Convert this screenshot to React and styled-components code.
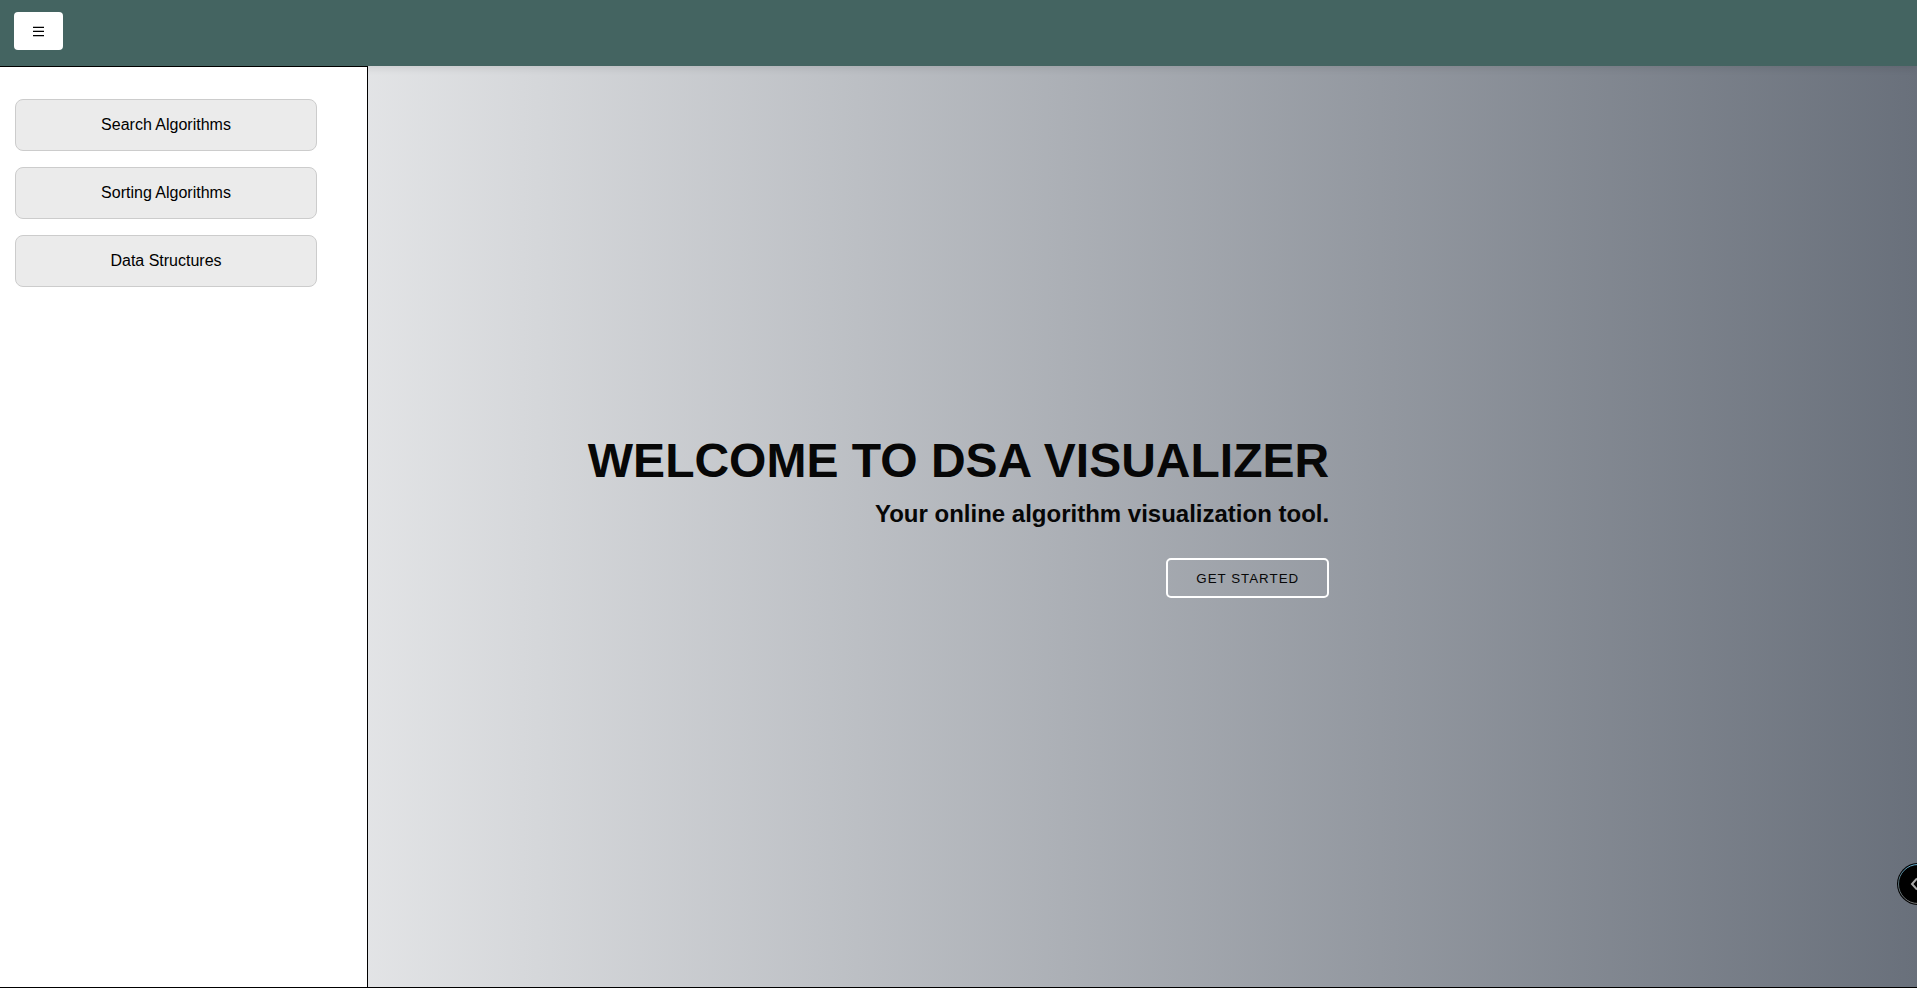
import React from "react";
import styled, { createGlobalStyle } from "styled-components";

const GlobalStyle = createGlobalStyle`
  * { box-sizing: border-box; }
  body {
    margin: 0;
    font-family: "Liberation Sans", Arial, sans-serif;
    color: #000;
  }
`;

const Page = styled.div`
  min-height: 100vh;
  display: grid;
  grid-template-rows: 66px 1fr;
`;

const Header = styled.header`
  position: relative;
  z-index: 1;
  display: flex;
  align-items: flex-start;
  padding: 12px 14px;
  background: #446461;
  box-shadow: 0 2px 8px rgba(0, 0, 0, 0.1);
`;

const MenuButton = styled.button`
  display: flex;
  align-items: center;
  justify-content: center;
  width: 49px;
  height: 38px;
  padding: 0;
  border: 0;
  border-radius: 4px;
  background: #fff;
  color: #000;
  cursor: pointer;
`;

const Body = styled.div`
  display: grid;
  grid-template-columns: 368px 1fr;
  border-bottom: 1px solid #000;
`;

const Sidebar = styled.nav`
  grid-area: 1 / 1;
  z-index: 2;
  display: flex;
  flex-direction: column;
  gap: 16px;
  padding: 32px 50px 16px 15px;
  background: #fff;
  border-top: 1px solid #000;
  border-right: 1px solid #000;
`;

const NavButton = styled.button`
  height: 52px;
  padding: 0;
  border: 1px solid #ccc;
  border-radius: 8px;
  background: #ebebeb;
  color: #000;
  font: 16px "Liberation Sans", Arial, sans-serif;
  cursor: pointer;
`;

const Hero = styled.main`
  grid-area: 1 / 1 / 2 / 3;
  position: relative;
  display: flex;
  align-items: center;
  justify-content: center;
  overflow: hidden;
  background: linear-gradient(to right, #fff, #69707b);
`;

const Intro = styled.section`
  display: flex;
  flex-direction: column;
  align-items: flex-end;
  padding-bottom: 21px;
  text-align: right;
  color: #070707;
`;

const Title = styled.h1`
  margin: 0 0 10px;
  font-size: 48px;
  line-height: 54px;
  text-transform: uppercase;
`;

const Subtitle = styled.h2`
  margin: 0 0 28px;
  font-size: 24px;
  line-height: 32px;
`;

const StartButton = styled.button`
  height: 40px;
  padding: 0 28px;
  border: 2px solid #fff;
  border-radius: 5px;
  background: transparent;
  color: inherit;
  font-family: "Liberation Sans", Arial, sans-serif;
  letter-spacing: 1px;
  text-transform: uppercase;
  cursor: pointer;
`;

const EdgeToggle = styled.button`
  position: absolute;
  right: -22px;
  bottom: 82px;
  width: 42px;
  height: 42px;
  padding: 0;
  border: 0;
  border-radius: 50%;
  background: #000;
  cursor: pointer;

  svg {
    display: block;
  }
`;

const sections = ["Search Algorithms", "Sorting Algorithms", "Data Structures"];

export default function App() {
  return (
    <>
      <GlobalStyle />
      <Page>
        <Header>
          <MenuButton type="button" aria-label="Menu">
            <svg width="11" height="12" viewBox="0 0 11 12" shapeRendering="crispEdges" aria-hidden="true">
              <path d="M0 2h11v1H0zM0 6h11v1H0zM0 10h11v1H0z" fill="#000" />
              <path d="M0 1h11v1H0zM0 5h11v1H0zM0 11h11v1H0z" fill="#bbb" />
            </svg>
          </MenuButton>
        </Header>
        <Body>
          <Sidebar>
            {sections.map((name) => (
              <NavButton type="button" key={name}>{name}</NavButton>
            ))}
          </Sidebar>
          <Hero>
            <Intro>
              <Title>Welcome to DSA Visualizer</Title>
              <Subtitle>Your online algorithm visualization tool.</Subtitle>
              <StartButton type="button">Get Started</StartButton>
            </Intro>
            <EdgeToggle type="button" aria-label="Open panel">
              <svg width="42" height="42" viewBox="0 0 42 42" fill="none" aria-hidden="true">
                <defs>
                  <linearGradient id="rim" x1="0" y1="0" x2="0" y2="1">
                    <stop offset="0" stopColor="#68b4d8" />
                    <stop offset="0.4" stopColor="#526d75" />
                    <stop offset="1" stopColor="#777" />
                  </linearGradient>
                </defs>
                <circle cx="21" cy="21" r="19.500" stroke="url(#rim)" strokeWidth="1" />
                <path d="M20 15.500l-5 5.500 5 5.500" stroke="#aaa" strokeWidth="2" />
              </svg>
            </EdgeToggle>
          </Hero>
        </Body>
      </Page>
    </>
  );
}
